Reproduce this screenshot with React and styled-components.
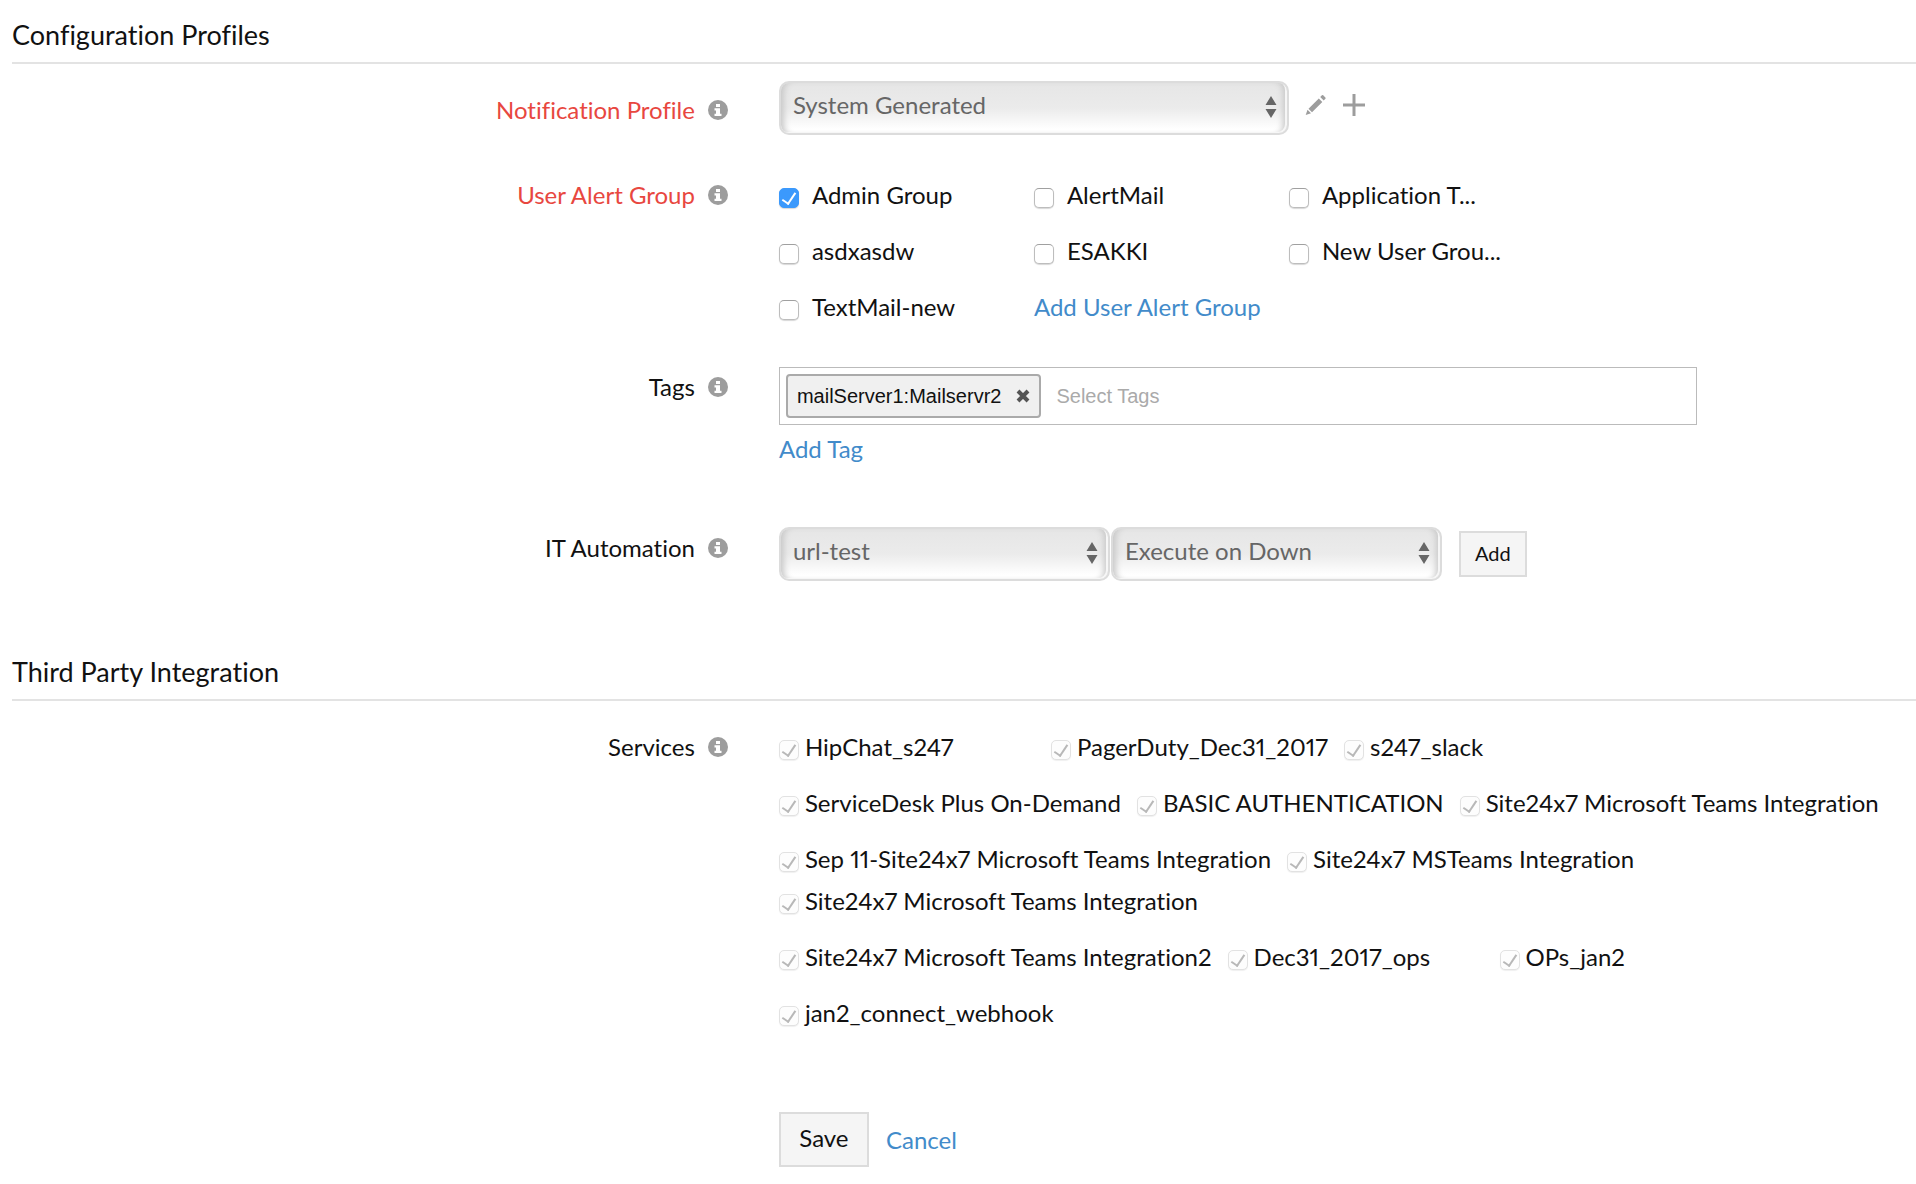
import React, {useState} from 'react';
import styled, {createGlobalStyle} from 'styled-components';

const GlobalStyle = createGlobalStyle`
  *{
    box-sizing: border-box;
  }
  body{
    margin: 0;
    background: #ffffff;
    color: #111111;
    font-family: Lato, "Liberation Sans", sans-serif;
    font-size: 24px;
    line-height: 28px;
    font-variant-ligatures: none;
    font-variant-numeric: proportional-nums;
  }
`;

const alertGroups = [
  'Admin Group',
  'AlertMail',
  'Application Team',
  'asdxasdw',
  'ESAKKI',
  'New User Group 1',
  'TextMail-new',
];

const serviceRows = [
  ['HipChat_s247', 'PagerDuty_Dec31_2017', 's247_slack'],
  ['ServiceDesk Plus On-Demand', 'BASIC AUTHENTICATION', 'Site24x7 Microsoft Teams Integration'],
  ['Sep 11-Site24x7 Microsoft Teams Integration', 'Site24x7 MSTeams Integration'],
  ['Site24x7 Microsoft Teams Integration'],
  ['Site24x7 Microsoft Teams Integration2', 'Dec31_2017_ops', 'OPs_jan2'],
  ['jan2_connect_webhook'],
];

const shorten = (name) => (name.length > 12 ? `${name.slice(0, 13).trim()}...` : name);

const InfoIcon = () => (
  <StyledInfo viewBox="0 0 20 20" aria-hidden="true">
    <circle cx="10" cy="10" r="10" fill="#9d9d9d" />
    <path d="M8 4h4v3H8zM6.500 8.200H12v5.500h1.500V16h-7v-2.300H8V10.500H6.500z" fill="#fff" />
  </StyledInfo>
);

const PencilIcon = () => (
  <svg width="22" height="22" viewBox="0 0 22 22" aria-hidden="true">
    <path d="M13.800 4.400l3.500 3.500L7 18.200l-3.500-3.500zM15.200 3l1.700-1.700q.7-.6 1.300 0l2.200 2.200q.6.700 0 1.300l-1.700 1.700zM2.500 15.700l3.500 3.500-5.300 1.800z" fill="#9d9d9d" />
  </svg>
);

const PlusIcon = () => (
  <svg width="22" height="22" viewBox="0 0 22 22" aria-hidden="true">
    <path d="M11 0v22M0 11h22" stroke="#9d9d9d" strokeWidth="3" />
  </svg>
);

const Dropdown = ({label, options, width}) => (
  <SelectWrap $width={width}>
    <select aria-label={label}>
      {options.map((option) => (
        <option key={option}>{option}</option>
      ))}
    </select>
    <svg width="12" height="22" viewBox="0 0 12 22" aria-hidden="true">
      <path d="M6 0l5.500 9H.5zM6 22l5.500-9H.5z" fill="#666" />
    </svg>
  </SelectWrap>
);

const Field = ({label, required, children}) => (
  <>
    <Label $required={required}>
      {label}
      <InfoIcon />
    </Label>
    <div>{children}</div>
  </>
);

const App = () => {
  const [selected, setSelected] = useState(['Admin Group']);
  const [tags, setTags] = useState(['mailServer1:Mailservr2']);

  const toggle = (name) =>
    setSelected(selected.includes(name) ? selected.filter((s) => s !== name) : [...selected, name]);

  return (
    <Page onSubmit={(e) => e.preventDefault()}>
      <GlobalStyle />

      <Heading>Configuration Profiles</Heading>
      <Fields>
        <Field label="Notification Profile" required>
          <Inline>
            <Dropdown label="Notification Profile" options={['System Generated']} width={510} />
            <IconButton type="button" aria-label="Edit profile"><PencilIcon /></IconButton>
            <IconButton type="button" aria-label="Add profile"><PlusIcon /></IconButton>
          </Inline>
        </Field>

        <Field label="User Alert Group" required>
          <Groups>
            {alertGroups.map((name) => (
              <Check key={name} $gap={13}>
                <input type="checkbox" checked={selected.includes(name)} onChange={() => toggle(name)} />
                <span>{shorten(name)}</span>
              </Check>
            ))}
            <Link href="#add-group">Add User Alert Group</Link>
          </Groups>
        </Field>

        <Field label="Tags">
          <Tags>
            <TagBox>
              {tags.map((tag) => (
                <Tag key={tag}>
                  {tag}
                  <button type="button" aria-label="Remove tag" onClick={() => setTags(tags.filter((t) => t !== tag))}>
                    <svg width="14" height="14" viewBox="0 0 14 14" aria-hidden="true">
                      <path d="M2 2l10 10M12 2L2 12" stroke="#555" strokeWidth="4" />
                    </svg>
                  </button>
                </Tag>
              ))}
              <input type="text" placeholder="Select Tags" aria-label="Select Tags" />
            </TagBox>
            <Link href="#add-tag">Add Tag</Link>
          </Tags>
        </Field>

        <Field label="IT Automation">
          <Automation>
            <Dropdown label="Automation" options={['url-test']} width={331} />
            <Dropdown label="Execute on" options={['Execute on Down']} width={331} />
            <AddButton type="button">Add</AddButton>
          </Automation>
        </Field>
      </Fields>

      <Heading>Third Party Integration</Heading>
      <Fields>
        <Field label="Services">
          <Services>
            {serviceRows.map((row, i) => (
              <ServiceRow key={i} $tight={i === 2}>
                {row.map((name) => (
                  <Check key={name} $gap={6} $min={256}>
                    <input type="checkbox" checked disabled readOnly />
                    <span>{name}</span>
                  </Check>
                ))}
              </ServiceRow>
            ))}
          </Services>
          <Actions>
            <SaveButton type="submit">Save</SaveButton>
            <Link href="#cancel">Cancel</Link>
          </Actions>
        </Field>
      </Fields>
    </Page>
  );
};

const Page = styled.form`
  padding: 18px 0 0 12px;
`;

const Heading = styled.h2`
  margin: 0;
  padding-bottom: 10px;
  border-bottom: 2px solid #e3e3e3;
  font-size: 27px;
  line-height: 34px;
  font-weight: 400;
`;

const Fields = styled.div`
  display: grid;
  grid-template-columns: minmax(0, 17fr) minmax(0, 27fr);
  column-gap: 51px;
  row-gap: 31px;
  padding-top: 17px;
`;

const Label = styled.div`
  display: flex;
  justify-content: flex-end;
  align-items: center;
  gap: 13px;
  height: 28px;
  margin-top: 15px;
  color: ${(props) => (props.$required ? '#e8473f' : '#111111')};
`;

const StyledInfo = styled.svg`
  width: 20px;
  height: 20px;
`;

const Inline = styled.div`
  display: flex;
  align-items: center;
  gap: 16px;
`;

const Automation = styled.div`
  display: flex;
  align-items: center;
  gap: 1px;
  padding: 8px 0 74px;
`;

const SelectWrap = styled.div`
  position: relative;
  width: ${(props) => props.$width}px;
  select{
    appearance: none;
    display: block;
    width: 100%;
    height: 54px;
    padding: 0 40px 6px 12px;
    border: 2px solid #dcdcdc;
    border-radius: 10px;
    background: linear-gradient(#e6e6e6, #ebebeb 50%, #ffffff 92%);
    box-shadow: inset -2px -1px 0 #f6f6f6, inset 7px 0 6px -4px #c8c8c8, inset -8px 0 6px -4px #c8c8c8;
    color: #666666;
    font: inherit;
  }
  svg{
    position: absolute;
    top: 15px;
    right: 12px;
    pointer-events: none;
  }
`;

const IconButton = styled.button`
  display: flex;
  margin-bottom: 6px;
  padding: 0;
  border: 0;
  background: none;
  cursor: pointer;
`;

const Groups = styled.div`
  display: grid;
  grid-template-columns: repeat(3, 255px);
  row-gap: 28px;
  padding: 15px 0 6px;
`;

const Check = styled.label`
  display: flex;
  align-items: center;
  gap: ${(props) => props.$gap}px;
  height: 28px;
  min-width: ${(props) => props.$min || 0}px;
  white-space: nowrap;
  input{
    appearance: none;
    display: grid;
    place-items: center;
    flex: none;
    width: 20px;
    height: 20px;
    margin: 6px 0 0;
    border: 1px solid #bdbdbd;
    border-top-color: #a0a0a0;
    border-radius: 5px;
    background: #ffffff;
    box-shadow: 0 1px 1px #d8d8d8;
  }
  input:checked{
    border-color: #3b99fc;
    background: #3b99fc;
  }
  input:checked::before{
    content: '';
    width: 6px;
    height: 12px;
    margin-bottom: 2px;
    border: solid #ffffff;
    border-width: 0 2px 2px 0;
    transform: rotate(34deg);
  }
  input:disabled{
    border-color: #e2e2e2;
    background: #fdfdfd;
    box-shadow: 0 1px 1px #f0f0f0;
  }
  input:disabled::before{
    border-color: #b8b8b8;
  }
`;

const Link = styled.a`
  color: #428bca;
  text-decoration: none;
`;

const Tags = styled.div`
  display: flex;
  flex-direction: column;
  align-items: flex-start;
  gap: 10px;
  padding: 9px 0 25px;
`;

const TagBox = styled.div`
  display: flex;
  align-items: center;
  gap: 15px;
  width: 100%;
  max-width: 918px;
  height: 58px;
  padding: 0 6px;
  border: 1px solid #bbbbbb;
  font-family: "Liberation Sans", sans-serif;
  font-size: 20px;
  input{
    flex: 1;
    border: 0;
    padding: 0;
    outline: 0;
    font: inherit;
  }
  input::placeholder{
    color: #aaaaaa;
  }
`;

const Tag = styled.span`
  display: flex;
  align-items: center;
  gap: 15px;
  height: 44px;
  padding: 0 9px;
  border: 2px solid #aaaaaa;
  border-radius: 4px;
  background: #f0f0f0;
  button{
    display: flex;
    padding: 0;
    border: 0;
    background: none;
  }
`;

const Button = styled.button`
  padding: 0 0 3px;
  border: 2px solid #dcdcdc;
  background: #f5f5f5;
  color: #111111;
  font: inherit;
`;

const AddButton = styled(Button)`
  width: 68px;
  height: 46px;
  margin-left: 16px;
  font-size: 20px;
`;

const SaveButton = styled(Button)`
  width: 90px;
  height: 55px;
`;

const Services = styled.div`
  padding-top: 15px;
`;

const ServiceRow = styled.div`
  display: flex;
  gap: 16px;
  margin-bottom: ${(props) => (props.$tight ? 14 : 28)}px;
`;

const Actions = styled.div`
  display: flex;
  align-items: center;
  gap: 17px;
  padding-top: 57px;
`;

export default App;
